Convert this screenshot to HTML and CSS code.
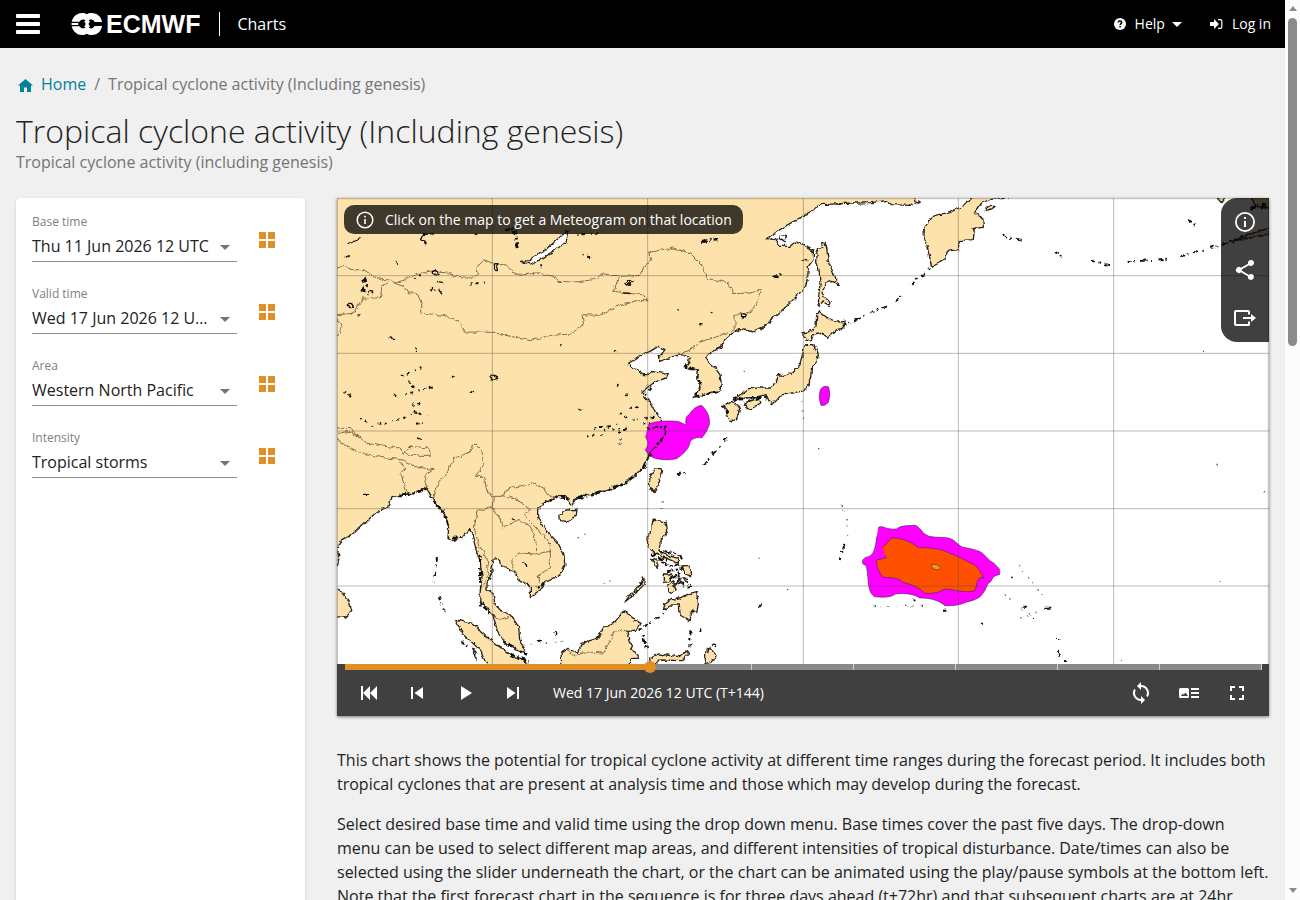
FILE: index.html
```html
<!DOCTYPE html>
<html lang="en">
<head>
<meta charset="utf-8">
<meta name="viewport" content="width=device-width, initial-scale=1">
<title>Tropical cyclone activity (Including genesis) | ECMWF Charts</title>
<link rel="stylesheet" href="styles.css">
</head>
<body>
<div class="page">
  <header class="topbar">
    <button class="burger" type="button" aria-label="Menu"><span></span><span></span><span></span></button>
    <a class="logo" href="#" aria-label="ECMWF">
      <svg width="32" height="24" viewBox="0 0 32 24" aria-hidden="true">
        <path fill="#fff" d="M.5 12C.5 6 5 1 11 1c2 0 3.500.4 4.800 1.200C17 1.400 18.600 1 20.500 1 26 1 30 4.500 31 9.500V14.500C30 19.500 26 23 20.500 23c-1.900 0-3.500-.4-4.700-1.200C14.500 22.600 13 23 11 23 5 23 .5 18 .5 12z"/>
        <path d="M0 9.700h8.500C9.300 8.300 10.600 7.600 12 7.600c1.200 0 2 .4 2.600 1.100l-1.400.9 1.600 2.400-1.600 2.400 1.400.9c-.6.700-1.400 1.100-2.600 1.100-1.400 0-2.700-.7-3.500-2.100H0v-1.300h7.300v-2H0z"/>
        <path d="M17.600 8.700c.6-.7 1.400-1.100 2.600-1.100 1.400 0 2.500.8 3.300 2.300H32v4.200h-8.500c-.8 1.500-1.900 2.300-3.300 2.300-1.200 0-2-.4-2.600-1.100l1.400-.9-1.600-2.400 1.600-2.400z"/>
      </svg>
      <span class="logo-word">ECMWF</span>
    </a>
    <a class="product" href="#">Charts</a>
    <nav class="account" aria-label="Account">
      <button class="account-item" type="button">
        <svg class="help-icon" width="12" height="12" viewBox="0 0 12 12" aria-hidden="true"><circle cx="6" cy="6" r="6" fill="#fff"/><path d="M4.200 4.500C4.300 2.300 7.700 2.400 7.700 4.400 7.700 5.600 6.100 5.700 6.100 7" fill="none" stroke="#000" stroke-width="1.500"/><path d="M5.300 8h1.600v1.600H5.300z"/></svg>
        Help
        <svg class="caret" width="10" height="5" viewBox="0 0 10 5" aria-hidden="true"><path d="M0 0h10L5 5z" fill="#fff"/></svg>
      </button>
      <a class="account-item" href="#">
        <svg class="login-icon" width="13" height="12" viewBox="0 0 13 12" aria-hidden="true"><path d="M0 4h4V1l5 5-5 5V8H0z" fill="#fff"/><path d="M8 1.700h2.500a1.300 1.300 0 0 1 1.300 1.300v6a1.300 1.300 0 0 1-1.300 1.300H8" fill="none" stroke="#fff" stroke-width="1.200"/></svg>
        Log in
      </a>
    </nav>
  </header>

  <main class="content">
    <nav class="crumbs" aria-label="Breadcrumb">
      <a href="#"><svg width="15" height="13" viewBox="0 0 15 13" aria-hidden="true"><path d="M7.500 0 15 6.500h-2V13H9V8.500H6V13H2V6.500H0z" fill="#00809d"/></svg>Home</a>
      <span>/</span>
      <span>Tropical cyclone activity (Including genesis)</span>
    </nav>
    <h1>Tropical cyclone activity (Including genesis)</h1>
    <p class="subtitle">Tropical cyclone activity (including genesis)</p>

    <div class="columns">
      <form class="filters">
        <div class="field">
          <div class="field-main">
            <label for="base">Base time</label>
            <div class="select"><select id="base"><option>Thu 11 Jun 2026 12 UTC</option></select></div>
          </div>
          <button type="button" aria-label="Browse base times"><svg width="16" height="16" viewBox="0 0 16 16"><path d="M0 0h7v7H0zM9 0h7v7H9zM0 9h7v7H0zM9 9h7v7H9z"/></svg></button>
        </div>
        <div class="field">
          <div class="field-main">
            <label for="valid">Valid time</label>
            <div class="select"><select id="valid"><option>Wed 17 Jun 2026 12 UTC (T+144)</option></select></div>
          </div>
          <button type="button" aria-label="Browse valid times"><svg width="16" height="16" viewBox="0 0 16 16"><path d="M0 0h7v7H0zM9 0h7v7H9zM0 9h7v7H0zM9 9h7v7H9z"/></svg></button>
        </div>
        <div class="field">
          <div class="field-main">
            <label for="area">Area</label>
            <div class="select"><select id="area"><option>Western North Pacific</option></select></div>
          </div>
          <button type="button" aria-label="Browse areas"><svg width="16" height="16" viewBox="0 0 16 16"><path d="M0 0h7v7H0zM9 0h7v7H9zM0 9h7v7H0zM9 9h7v7H9z"/></svg></button>
        </div>
        <div class="field">
          <div class="field-main">
            <label for="intensity">Intensity</label>
            <div class="select"><select id="intensity"><option>Tropical storms</option></select></div>
          </div>
          <button type="button" aria-label="Browse intensities"><svg width="16" height="16" viewBox="0 0 16 16"><path d="M0 0h7v7H0zM9 0h7v7H9zM0 9h7v7H0zM9 9h7v7H9z"/></svg></button>
        </div>
      </form>

      <div class="chart-column">
        <section class="viewer" aria-label="Chart">
          <div class="map-wrap">
            <svg class="map" viewBox="0 0 2796 1398" role="img" aria-label="Map of tropical cyclone activity, Western North Pacific">
              <defs>
                <filter id="rough" x="0" y="0" width="2796" height="1398" filterUnits="userSpaceOnUse" color-interpolation-filters="sRGB">
                  <feTurbulence type="fractalNoise" baseFrequency="0.06" numOctaves="3" seed="4" result="n"/>
                  <feDisplacementMap in="SourceGraphic" in2="n" scale="14" xChannelSelector="R" yChannelSelector="G"/>
                </filter>
              </defs>
              <rect width="2796" height="1398" fill="#fff"/>
              <g filter="url(#rough)">
                <g fill="#fee2ab" stroke="#2a241c" stroke-width="4" stroke-linejoin="round">
                  <!-- mainland Asia -->
                  <path d="M-20-20H1729L1734 8 1749 14 1719 22 1664 20 1649 8 1604 14 1549 15 1454 20 1409 48 1349 82 1309 108 1289 122 1319 125 1329 145 1359 145 1374 132 1399 138 1429 160 1429 185 1414 205 1412 240 1406 265 1379 295 1349 325 1309 360 1279 388 1249 402 1219 395 1209 392 1184 408 1159 432 1154 445 1114 470 1106 480 1114 492 1134 510 1149 530 1153 560 1147 578 1124 583 1099 592 1087 600 1074 590 1089 570 1087 548 1079 540 1081 515 1059 515 1044 508 1054 495 1057 480 1034 470 1009 475 969 490 964 480 984 455 964 445 939 460 920 468 895 485 875 495 885 508 905 512 915 530 930 530 945 520 994 530 989 540 959 548 929 570 915 585 939 612 954 640 974 665 969 680 989 690 974 720 949 755 935 771 920 806 895 831 860 858 800 878 740 896 712 904 705 921 695 916 690 896 660 896 625 911 602 934 602 961 625 996 660 1031 680 1066 684 1101 670 1131 630 1151 610 1176 580 1196 580 1161 550 1151 530 1121 490 1101 487 1084 468 1086 464 1126 450 1156 450 1176 468 1186 475 1221 490 1236 520 1251 545 1286 548 1326 565 1366 545 1356 500 1331 480 1296 470 1256 450 1226 428 1211 430 1176 435 1136 430 1096 415 1046 405 1006 397 994 380 1014 350 1028 333 1021 335 986 318 941 290 911 270 871 245 881 200 891 165 896 155 926 120 941 50 1006 10 1031 0 1050 6 1080 0 1110-20 1110z"/>
                  <!-- Sakhalin, Japan, Kamchatka, Alaska -->
                  <path d="M1454 135 1464 132 1469 150 1474 190 1489 225 1507 262 1484 250 1464 258 1457 280 1464 300 1479 310 1477 322 1459 312 1447 325 1444 305 1449 260 1447 220 1439 190 1441 155 1457 150z"/>
                  <path d="M1444 338 1469 358 1499 372 1521 370 1521 390 1499 395 1474 418 1449 405 1429 408 1424 425 1404 428 1397 405 1424 398 1437 385 1439 350z"/>
                  <path d="M1404 440 1429 440 1444 470 1439 495 1424 505 1421 540 1409 575 1389 580 1364 585 1344 590 1329 595 1309 618 1294 610 1284 590 1259 598 1229 600 1189 605 1209 590 1234 572 1269 570 1304 570 1319 550 1324 530 1329 535 1364 525 1389 500 1397 470zM1224 615 1269 600 1271 615 1244 632 1227 632zM1159 622 1184 610 1209 630 1199 665 1184 672 1171 655 1174 640z"/>
                  <path d="M1894 10 1869 28 1829 45 1794 52 1779 65 1762 90 1761 115 1774 160 1784 207 1824 185 1831 160 1864 155 1867 128 1909 125 1911 100 1905 92 1939 88 1937 60 1912 45 1934 15 1960 4 2014 0 2014-20H1914zM1944 32 1960 22 1974 22 1966 32 1950 38zM2634-10 2654 12 2670-10zM2740-10 2755 28 2800 30V-10zM2679 130 2729 112 2769 98 2800 90V105L2739 120z"/>
                  <!-- Taiwan, Hainan, Philippines -->
                  <path d="M969 811 977 816 969 846 951 884 937 861 939 836 954 814zM690 936 720 934 718 951 695 971 670 968 668 951zM944 966 984 971 989 1001 969 1031 967 1056 989 1071 1024 1081 1024 1096 989 1081 954 1068 934 1046 929 1018 939 1011zM944 1081 964 1091 961 1111zM1034 1106 1059 1106 1061 1136 1044 1126zM979 1128 1004 1128 999 1151 979 1154zM989 1166 1009 1151 1014 1176 999 1186zM1037 1136 1051 1141 1051 1158zM1012 1166 1028 1142 1030 1152zM979 1236 984 1216 1004 1201 1019 1204 1059 1186 1079 1181 1084 1216 1079 1246 1067 1236 1057 1268 1029 1251 1027 1221 999 1221zM864 1211 884 1186 924 1141 924 1156 894 1188z"/>
                  <!-- Borneo, Sulawesi, Halmahera, Sumatra, Sri Lanka -->
                  <path d="M675 1410 672 1366 690 1354 725 1364 732 1336 780 1321 800 1291 830 1276 862 1236 885 1261 912 1276 900 1296 870 1301 878 1336 890 1361 908 1381 880 1381 875 1410zM930 1410 939 1381 964 1368 1029 1376 1051 1358 1054 1368 1034 1388 969 1386 945 1410zM1104 1396 1107 1356 1119 1351 1137 1371 1134 1386 1119 1394zM355 1266 410 1276 435 1306 480 1341 530 1376 565 1385 570 1410H455L430 1356 380 1311zM-10 1170 8 1176 38 1214 44 1241 25 1258-10 1256z"/>
                  <!-- Lake Baikal -->
                  <path fill="#fff" d="M550 190 575 188 620 160 660 125 690 98 697 102 685 135 640 165 610 185 580 198z"/>
                </g>
                <!-- political borders -->
                <path fill="none" stroke="#846c4b" stroke-width="3" d="M0 210 20 205 45 215 80 215 105 232 130 245 160 245 175 255 205 245 250 225 290 218 330 222 350 235 410 238 425 228 418 205 440 185 465 195 510 202 525 222 550 232 600 225 650 235 660 250 715 252 770 245 800 228 850 235 910 232 925 200 945 185 935 165 960 158 1009 150 1059 165 1094 200 1109 240 1174 255 1189 287 1239 285 1274 275 1259 315 1239 345 1194 352 1194 395 1129 420 1089 432 1059 455 1034 468M175 255 200 265 215 285 240 285 255 320 250 345 320 352 365 370 385 402 470 403 520 415 580 428 640 412 700 408 740 380 735 350 790 352 840 325 900 308 930 308 915 290 870 285 830 280 845 238M160 250 135 265 130 300 75 300 55 345 0 350M0 365 15 385 0 415M0 690 40 692 70 720M0 706 40 700 90 735 140 745 190 750 200 770M0 726 60 760 130 778 200 786 230 805 290 815 260 835 270 870M190 790 205 812 190 825 210 885M205 765 220 745 275 750 280 772 215 772zM290 900 305 850 325 835 350 780 400 762 412 735 435 760 440 800 415 835 440 835 450 880 470 895 500 895 505 875 585 855 620 870 630 892 660 898M470 895 465 925 420 940 412 990 425 1040 450 1080 455 1130 440 1160M465 925 490 965 495 990 545 965 580 985 597 1030 595 1060M510 895 540 905 580 935 560 950 600 990 640 1040 640 1065M540 1130 525 1105 525 1085 545 1065 595 1068 640 1060 640 1110 600 1135 605 1150M470 1250 490 1265 515 1255M690 1358 715 1378 740 1362 800 1365 835 1298 870 1298"/>
                <!-- ragged coasts and island chains -->
                <g fill="none" stroke="#111">
                  <path stroke-width="8" stroke-dasharray="7 6 16 9 5 12" d="M989 690 974 720 949 755 935 771 920 806 895 831 860 858 800 878 740 896 712 904 660 896 625 911M270 871 245 881 190 891M290 911 318 941 335 986M333 1021 380 1018M430 1070V1180M1044 505 1081 515 1089 570 1074 595 1140 582M1189 605 1290 596M1159 622 1175 650M930 1350 910 1290M500 1331 570 1370M600 1170 630 1151M430 1216 470 1256"/>
                  <path stroke-width="6" stroke-dasharray="12 8 5 14 18 12 4 20" d="M1517 385 1600 345 1650 325M1677 310 1700 285M1723 260 1784 207M2000 110 2020 122 2034 120M2040 122 2054 128M2154 162 2180 176M2265 188 2320 202M2372 192 2490 182M2530 175 2600 155 2690 132M2555 65 2575 82M300 1080 290 1150M305 1195 322 1240M885 1200 930 1120M920 1285 980 1245M1100 800 1175 715M1020 829 1058 820M370 1330 410 1355M600 1330 612 1325M1522 1040 1508 1086M1060 1300V1345M1090 1290v20M1265 1230 1275 1215"/>
                  <path stroke-width="10" stroke-dasharray="14 7 5 9" d="M505 95 530 90 545 155M1095 130 1145 125M1310 240 1335 225M80 240 90 262 80 275 95 285M2740 30 2790 20M520 1372 575 1390"/>
                  <path stroke-width="6" stroke-dasharray="22 5 9 4" d="M944 1072 985 1060 1030 1072 1035 1085M975 1090 1000 1105 1025 1100 1045 1130M990 1120 1020 1115 1040 1165M1000 1140 1030 1130M960 1080 990 1085M1050 1170 1065 1160"/>
                  <path stroke-width="4" d="M258 110 290 107M258 112l-5 14 12 4 4 12M30 138l44-18M26 178l10-5M178 190l4 10M288 222q12-10 16 6-12 10-16-6M472 198q14-6 10 16-10 12-10-16M300 250l18 4M280 278q12-14 18 0M305 275l10 14M30 320q14-10 20 6-12 8-20-6M62 350l10 2M100 280q4-6 4 6M158 420l14 2M236 448l6 14M458 536q16-12 24 8-16 8-24-8M398 582l14 2M862 262q14-18 24-14-8 16-24 14M860 285l20 2M410 108l10 2M724 634l12 2M1210 352q4-12 16-6 4 12-10 14zM1324 115q10-8 24-2l-4 20-20-12M1389 190l22-6M1120 340l6 5M1026 330v6M1090 380h6M555 1095q12 0 18 14M405 1360q12-6 12 20zM650 1305q12-10 8 8M240 720l12 4M80 892h14M525 962l8 4M1112 1365l8-20M1124 1345q6-14 12 2"/>
                  <!-- lakes and islets on the plateau and in eastern China -->
                  <path stroke-width="6" stroke-dasharray="5 11 9 17 3 13" d="M195 534 225 520 255 510M215 550 240 578 300 565M205 590 255 575M225 620 250 615M230 640 270 655M70 660 110 690M125 680 150 675 215 655 245 640M170 590 180 592M240 680 258 676M20 582 55 600M235 245 250 230M400 260 445 250M345 535 355 540M750 715 790 712 815 685 842 680M770 690 820 690 850 705 848 740M845 695 880 690M880 630 920 625M850 645 870 660 905 665M925 660 960 655M920 680 955 672M868 590 874 595M840 560 850 562M670 440 676 444M830 460 836 455M720 110 790 105M735 172 770 180M610 205 620 204M925 590 960 545"/>
                  <path stroke-width="4" stroke="#555" stroke-dasharray="4 16 3 24" d="M725 1020 760 1000M800 1160 835 1140M560 1340 680 1330M1350 1175h10M1400 660 1390 600M1445 750v30M975 910v40M1512 920 1530 960 1530 1030M1610 1226 1760 1225M2000 1190 2080 1250M2045 1100 2130 1210M2050 1260 2145 1230M2350 1390h10M2600 460h8M2640 800v12M2780 880l8 3M2650 1150v12M1220 520h10M1265 1080h5"/>
                  <path stroke-width="6" d="M1730 1207h6M1818 1238h10M1932 1274h6M2020 1138h5M2060 1226h8M2125 1232h16M2085 1260h6M2160 1326h7M2166 1355v8M2168 1366v8M2164 1376h5M2178 1392h12"/>
                </g>
              </g>
              <!-- activity probability areas -->
              <g stroke="#4a1f78" stroke-width="2" stroke-linejoin="round">
                <path fill="#f0f" d="M934 680C950 668 1000 668 1019 670 1032 672 1040 680 1047 680 1046 670 1045 655 1056 650 1065 640 1068 628 1094 622 1106 635 1116 648 1117 665 1122 680 1104 710 1094 720 1080 716 1066 722 1060 730 1056 755 1036 770 1019 782 995 786 984 787 960 782 949 780 935 774 925 755 935 742 935 730 925 716 930 695 934 680z"/>
                <path fill="#f0f" d="M1450 575q10-15 25-8 7 24-1 46-10 12-22 9-10-25-2-47z"/>
                <g transform="translate(1449 846)">
                  <path fill="#f0f" d="M175 142C190 135 195 150 230 147 245 134 270 138 285 136 303 142 304 160 325 168 355 176 376 168 395 178 415 190 420 202 435 203 460 208 472 210 485 218 505 235 510 245 520 248 530 260 545 265 538 284 515 288 520 295 512 305 500 310 500 325 494 332 480 355 470 358 440 366 425 372 410 378 375 377 350 355 315 354 300 354 275 338 245 340 225 342 215 352 190 353 165 350 150 345 145 320 144 295 142 280 142 265 137 255 124 256 122 233 145 230 160 226 167 205 170 170 170 150 175 142z"/>
                  <path fill="#ff5000" d="M187 202C200 195 205 180 215 175 235 170 275 185 295 203 330 202 370 208 385 218 430 235 440 245 460 252 475 262 480 275 491 292 465 290 475 315 463 333 430 340 400 328 375 327 360 335 345 342 315 340 300 325 270 310 250 308 235 292 215 294 190 292 180 280 168 262 170 240 185 235 210 235 195 228 195 210 187 202z"/>
                  <path fill="#ff9800" d="M334 254q18-5 28 10-4 9-14 5-16-4-14-15z"/>
                </g>
              </g>
              <path fill="none" stroke="#111" stroke-width="6" stroke-dasharray="9 6 18 4" filter="url(#rough)" d="M932 692 989 686 974 725 949 755 930 785"/>
              <path fill="none" stroke="#50463c" stroke-opacity=".38" stroke-width="3" d="M0 2H2796M0 233H2796M0 466H2796M0 699H2796M0 932H2796M0 1164H2796M466 0V1398M932 0V1398M1399 0V1398M1864 0V1398M2330 0V1398M2794 0V1398M1 0V1398"/>
            </svg>
            <div class="hint">
              <svg width="18" height="18" viewBox="0 0 18 18" aria-hidden="true"><circle cx="9" cy="9" r="7.800" fill="none" stroke="#fff" stroke-width="1.500"/><path d="M8.200 4.800h1.600v1.600H8.200zM8.200 8h1.600v5H8.200z" fill="#fff"/></svg>
              Click on the map to get a Meteogram on that location
            </div>
            <div class="map-tools">
              <button type="button" aria-label="Information"><svg width="24" height="24" viewBox="0 0 24 24"><path d="M11 17h2v-6h-2zm1-15a10 10 0 1 0 0 20 10 10 0 0 0 0-20zm0 18.200a8.200 8.200 0 1 1 0-16.400 8.200 8.200 0 0 1 0 16.400zM11 9h2V7h-2z"/></svg></button>
              <button type="button" aria-label="Share"><svg width="24" height="24" viewBox="0 0 24 24"><path d="M18 16.100c-.8 0-1.500.3-2 .8l-7.100-4.200a3 3 0 0 0 0-1.400L16 7.200A3 3 0 1 0 15 5c0 .2 0 .5.100.7L8 9.800a3 3 0 1 0 0 4.400l7.100 4.200A2.900 2.900 0 1 0 18 16.100z"/></svg></button>
              <button type="button" aria-label="Export"><svg width="24" height="24" viewBox="0 0 24 24"><path d="M16 8.500V5.500Q16 5 15.500 5H3Q2 5 2 6v12q0 1 1 1h12.500q.5 0 .5-.5v-3" fill="none" stroke="#fff" stroke-width="2"/><path d="M10 11h8V8l5 4-5 4v-3h-8z"/></svg></button>
            </div>
          </div>
          <div class="player">
            <input class="timeline" type="range" min="72" max="288" step="24" value="144" aria-label="Forecast step">
            <div class="controls">
              <button type="button" aria-label="First"><svg width="24" height="24" viewBox="0 0 24 24"><path d="M4 5h2v14H4zM13 5v14l-7-7zM20 5v14l-7-7z"/></svg></button>
              <button type="button" aria-label="Previous"><svg width="24" height="24" viewBox="0 0 24 24"><path d="M6 6h2v12H6zM18 6v12l-8.500-6z"/></svg></button>
              <button type="button" aria-label="Play"><svg width="24" height="24" viewBox="0 0 24 24"><path d="M8 5v14l11-7z"/></svg></button>
              <button type="button" aria-label="Next"><svg width="24" height="24" viewBox="0 0 24 24"><path d="M6 6v12l8.500-6zM16 6h2v12h-2z"/></svg></button>
              <span class="step">Wed 17 Jun 2026 12 UTC (T+144)</span>
              <button type="button" aria-label="Loop"><svg width="24" height="24" viewBox="0 0 24 24"><path d="M12 4V1L8 5l4 4V6a6 6 0 0 1 5.300 8.800l1.460 1.460A8 8 0 0 0 12 4zm0 14a6 6 0 0 1-5.300-8.800L5.240 7.740A8 8 0 0 0 12 20v3l4-4-4-4z"/></svg></button>
              <button type="button" aria-label="Legend"><svg width="24" height="24" viewBox="0 0 24 24"><path d="M14 7h8v2h-8zM14 15h8v2h-8zM14 11h8v2h-8z"/><path fill-rule="evenodd" d="M3.500 7h7q1.500 0 1.500 1.500v7q0 1.500-1.500 1.500h-7Q2 17 2 15.500v-7Q2 7 3.500 7zm.5 8h7l-2.500-3.500-1.800 2.300-1-1.200z"/></svg></button>
              <button type="button" aria-label="Full screen"><svg width="24" height="24" viewBox="0 0 24 24"><path d="M7 14H5v5h5v-2H7zM5 10h2V7h3V5H5zm12 7h-3v2h5v-5h-2zM14 5v2h3v3h2V5z"/></svg></button>
            </div>
          </div>
        </section>

        <div class="description">
          <p>This chart shows the potential for tropical cyclone activity at different time ranges during the forecast period. It includes both tropical cyclones that are present at analysis time and those which may develop during the forecast.</p>
          <p>Select desired base time and valid time using the drop down menu. Base times cover the past five days. The drop-down menu can be used to select different map areas, and different intensities of tropical disturbance. Date/times can also be selected using the slider underneath the chart, or the chart can be animated using the play/pause symbols at the bottom left. Note that the first forecast chart in the sequence is for three days ahead (t+72hr) and that subsequent charts are at 24hr</p>
        </div>
      </div>
    </div>
  </main>
</div>
<div class="scrollbar" aria-hidden="true"><i class="up"></i><i class="thumb"></i><i class="down"></i></div>
</body>
</html>
```

FILE: styles.css
```css
* { box-sizing: border-box; }

body {
  margin: 0;
  display: flex;
  height: 100vh;
  overflow: hidden;
  background: #f0f0f0;
  color: #222;
  font: 16px/24px "Open Sans", "Noto Sans", sans-serif;
}

button {
  margin: 0;
  padding: 0;
  border: 0;
  background: none;
  color: inherit;
  font: inherit;
  cursor: pointer;
}

svg { display: block; }
a { color: #00809d; text-decoration: none; }

.page {
  flex: 1;
  min-width: 0;
  overflow-y: auto;
  scrollbar-width: none;
}

/* Top bar */
.topbar {
  display: flex;
  align-items: center;
  height: 48px;
  padding: 0 14px 0 16px;
  background: #000;
  color: #fff;
}
.topbar a { color: #fff; }
.burger { display: grid; gap: 4px; width: 24px; }
.burger span { height: 4px; border-radius: 1px; background: #fff; }
.logo { display: flex; align-items: center; gap: 3px; margin-left: 31px; }
.logo-word { font: bold 25px/24px "Liberation Sans", Arial, sans-serif; }
.product {
  margin-left: 19px;
  padding-left: 17px;
  border-left: 1px solid #fff;
}
.account { display: flex; gap: 28px; margin-left: auto; font-size: 14px; }
.account-item { display: flex; align-items: center; }
.help-icon, .login-icon { margin-right: 9px; }
.caret { margin-left: 7px; }

/* Heading */
.content { padding: 24px 16px; }
.crumbs { display: flex; gap: 8px; color: #757575; }
.crumbs a { display: flex; align-items: center; gap: 8px; padding-left: 2px; }
.crumbs svg { margin-top: 2px; }
h1 { margin: 15px 0 0; font-size: 32px; font-weight: 300; line-height: 40px; }
.subtitle { margin: 1px 0 26px; line-height: 20px; color: #757575; }

.columns {
  display: grid;
  grid-template-columns: 289px minmax(0, 1fr);
  gap: 32px;
}

/* Filters */
.filters {
  padding: 16px;
  border-radius: 4px;
  background: #fff;
  box-shadow: 0 1px 3px rgba(0, 0, 0, .16);
}
.field { display: flex; align-items: center; gap: 22px; height: 48px; margin-bottom: 24px; }
.field-main { flex: 0 1 205px; min-width: 0; }
.field label { display: block; font-size: 12px; line-height: 16px; color: #808080; }
.field svg { fill: #e08e26; }
.field button { padding-top: 4px; }
.select { position: relative; border-bottom: 1px solid #8c8c8c; }
.select::after {
  content: "";
  position: absolute;
  right: 7px;
  top: 15px;
  border: 5px solid transparent;
  border-top-color: #757575;
  border-bottom: 0;
  pointer-events: none;
}
.select select {
  display: block;
  width: 100%;
  height: 31px;
  padding: 0 27px 0 0;
  border: 0;
  background: none;
  color: #222;
  font: inherit;
  appearance: none;
  text-overflow: ellipsis;
}

/* Chart viewer */
.viewer { background: #404040; box-shadow: 0 1px 3px rgba(0, 0, 0, .5); }
.map-wrap { position: relative; }
.map { width: 100%; height: auto; }
.hint {
  position: absolute;
  left: 7px;
  top: 7px;
  display: flex;
  align-items: center;
  gap: 11px;
  height: 29px;
  padding: 0 11px 0 12px;
  border-radius: 10px;
  background: rgba(0, 0, 0, .75);
  color: #fff;
  font-size: 14px;
}
.map-tools {
  position: absolute;
  right: 0;
  top: 0;
  display: grid;
  border-radius: 16px 0 0 16px;
  background: rgba(0, 0, 0, .75);
}
.map-tools button, .controls button {
  display: grid;
  place-items: center;
  width: 48px;
  height: 48px;
}
.map-tools svg, .controls svg { fill: #fff; }
.controls button { height: 46px; }
.player { position: relative; }
.timeline {
  display: block;
  width: calc(100% - 4px);
  height: 12px;
  margin: -3px 2px;
  appearance: none;
  background:
    linear-gradient(#e08e26, #e08e26) 6px 3px / calc((100% - 12px) / 3) 6px no-repeat,
    linear-gradient(to right, #8a8a8a, #8a8a8a) 6px 3px / calc(100% - 12px) 6px no-repeat;
  position: absolute;
  top: 0;
}
.timeline::-webkit-slider-thumb {
  appearance: none;
  width: 12px;
  height: 12px;
  border-radius: 50%;
  background: #e08e26;
}
.player::after {
  content: "";
  position: absolute;
  top: 0;
  left: calc(8px + (100% - 16px) / 3);
  right: 7px;
  height: 6px;
  background: repeating-linear-gradient(to right, transparent 0 calc(100% / 6 - 1px), #d0d0d0 calc(100% / 6 - 1px) calc(100% / 6));
  pointer-events: none;
}
.controls {
  display: flex;
  align-items: center;
  padding: 6px 8px 0;
  color: #fff;
  font-size: 14px;
}
.step { flex: 1; padding-left: 16px; }

.description { margin-top: 32px; }
.description p { margin: 0 0 16px; }

/* Window scrollbar */
.scrollbar {
  flex: none;
  display: flex;
  flex-direction: column;
  align-items: center;
  width: 15px;
  padding: 6px 0 7px;
  background: #fcfcfc;
}
.scrollbar .up { border: 4px solid transparent; border-bottom: 5px solid #8b8b8b; border-top: 0; }
.scrollbar .down { margin-top: auto; border: 4px solid transparent; border-top: 5px solid #8b8b8b; border-bottom: 0; }
.scrollbar .thumb { width: 9px; height: 37%; margin-top: 7px; border-radius: 5px; background: #8b8b8b; }
```
